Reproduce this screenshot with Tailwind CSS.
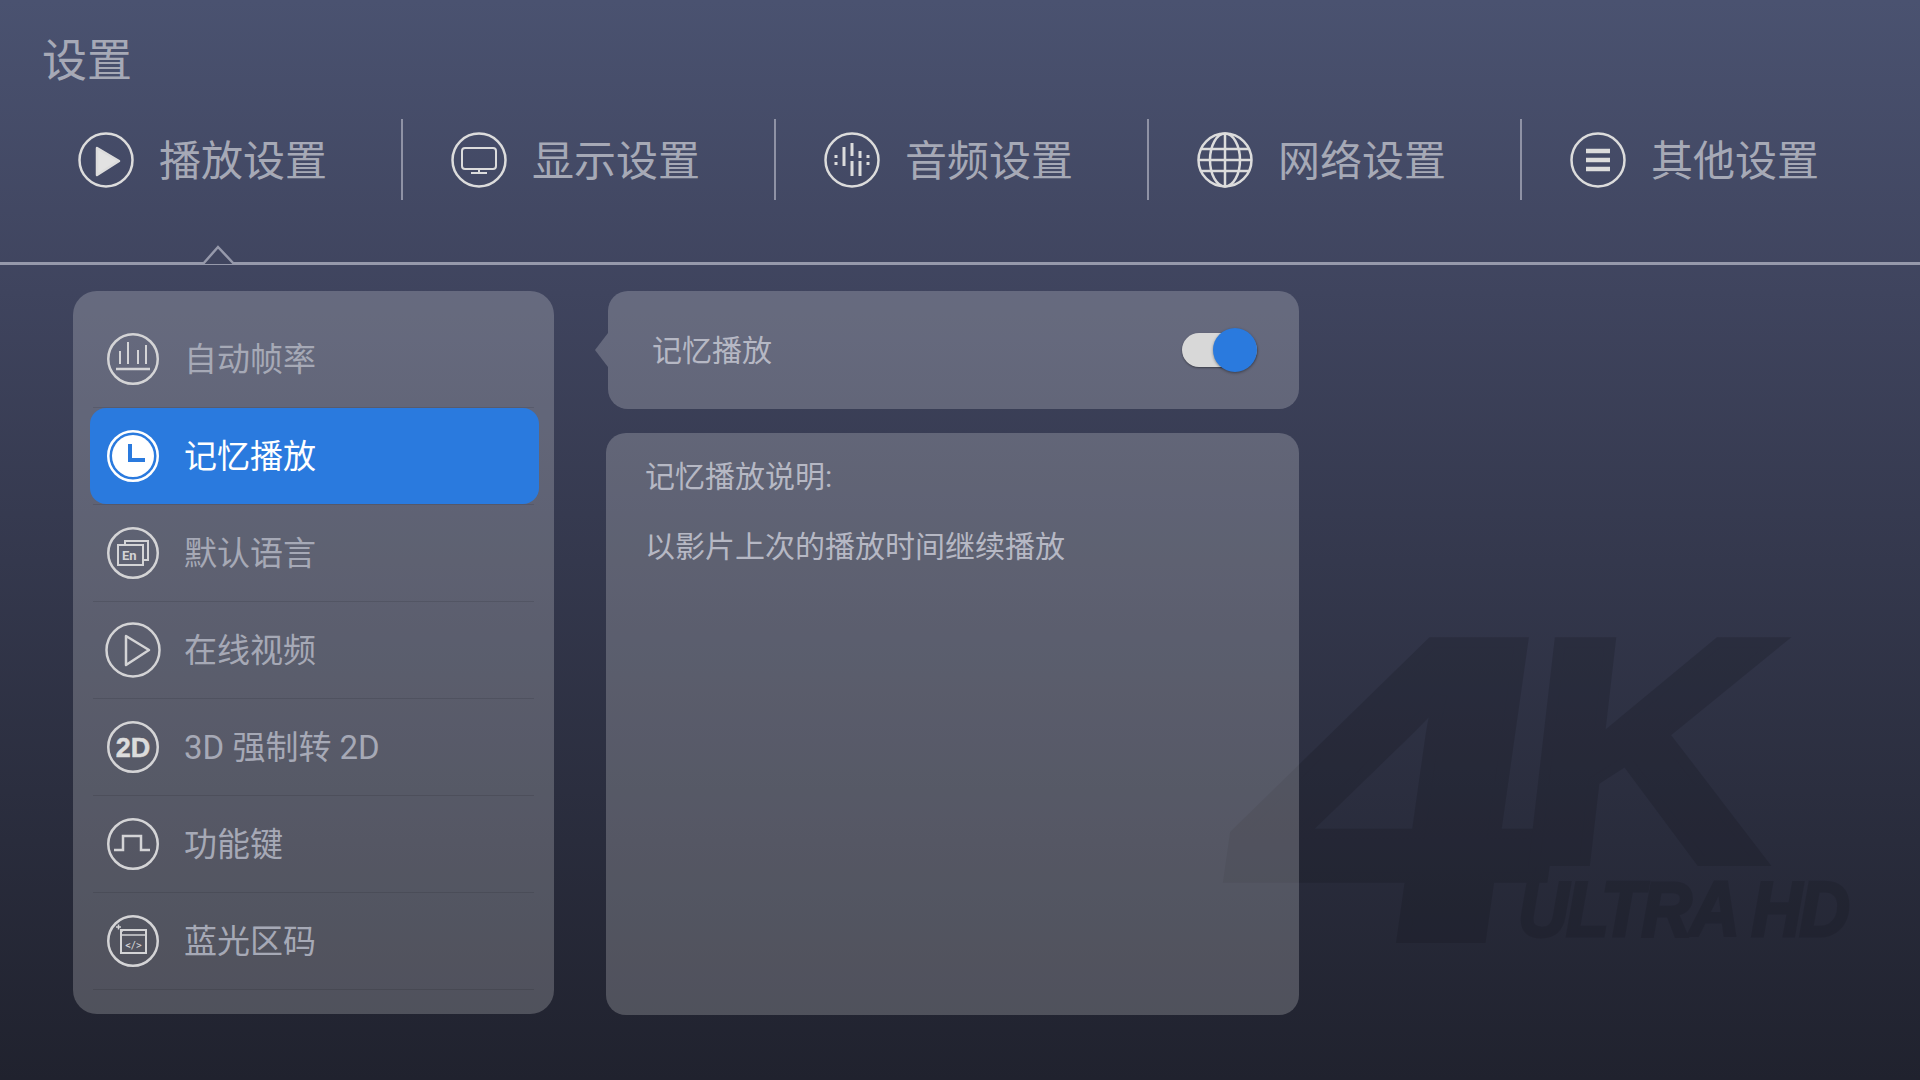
<!DOCTYPE html>
<html lang="zh-CN">
<head>
  <meta charset="UTF-8" />
  <title>设置</title>
  <script src="https://cdn.jsdelivr.net/npm/@tailwindcss/browser@4"></script>
</head>
<body class="relative w-[1920px] h-[1080px] overflow-hidden bg-gradient-to-b from-[#4a5270] via-[#3f445e] via-27% to-[#20222e] text-[#a6a9b6] font-['Roboto','Noto_Sans_CJK_SC',sans-serif]">

  <!-- 4K watermark, sits under the panels -->
  <div class="absolute left-0 top-0 w-full h-full text-[#14151d] opacity-[0.22] font-['Liberation_Sans',sans-serif] font-bold select-none">
    <span class="absolute left-[1256px] top-[635px] text-[430px] leading-[0.72] origin-top-left scale-x-[1.35] -skew-x-6 [-webkit-text-stroke:10px_#14151d]">4</span>
    <span class="absolute left-[1537px] top-[637px] text-[318px] leading-[0.72] origin-top-left scale-x-[1.1] -skew-x-6 [-webkit-text-stroke:10px_#14151d]">K</span>
    <span class="absolute left-[1518px] top-[881px] text-[78px] leading-[0.72] tracking-[-3px] italic origin-top-left scale-x-[0.9] [-webkit-text-stroke:3px_#14151d]">ULTRA HD</span>
  </div>

  <div class="relative">
    <h1 class="pt-[38px] pl-[42px] text-[45px] leading-[48px] font-normal">设置</h1>

    <!-- Tabs -->
    <div class="flex mt-[33px] h-[81px] pl-[30px] text-[42px]">
      <div class="w-[373px] flex items-center gap-[25px] pl-[48px] border-r-2 border-[#8f92a5]">
        <svg class="w-[56px] h-[56px]" viewBox="0 0 56 56" fill="none" stroke="#dcdcdc" stroke-width="2.500"><circle cx="28" cy="28" r="26.500"/><path d="M19 16 41 29 19 43z" fill="#e2e2e2" stroke-linejoin="round"/></svg>
        <span class="pt-[4px]">播放设置</span>
      </div>
      <div class="w-[373px] flex items-center gap-[25px] pl-[48px] border-r-2 border-[#8f92a5]">
        <svg class="w-[56px] h-[56px]" viewBox="0 0 56 56" fill="none" stroke="#dcdcdc" stroke-width="2.500"><circle cx="28" cy="28" r="26.500"/><rect x="11" y="16" width="34" height="21" rx="3" stroke-width="2"/><path d="M28 37v4M20 41h16" stroke-width="2"/></svg>
        <span class="pt-[4px]">显示设置</span>
      </div>
      <div class="w-[373px] flex items-center gap-[25px] pl-[48px] border-r-2 border-[#8f92a5]">
        <svg class="w-[56px] h-[56px]" viewBox="0 0 56 56" fill="none" stroke="#dcdcdc" stroke-width="2.500"><circle cx="28" cy="28" r="26.500"/><path d="M12 23v3M12 30v3M20 15v19M28 11v13M28 29v15M36 19v7M36 29v15M44 23v3M44 30v3" stroke-width="3"/></svg>
        <span class="pt-[4px]">音频设置</span>
      </div>
      <div class="w-[373px] flex items-center gap-[25px] pl-[48px] border-r-2 border-[#8f92a5]">
        <svg class="w-[56px] h-[56px]" viewBox="0 0 56 56" fill="none" stroke="#dcdcdc" stroke-width="2.500"><circle cx="28" cy="28" r="26.500"/><ellipse cx="28" cy="28" rx="15" ry="26.500"/><path d="M28 1.500v53M1.500 28h53M4 17h48M4 39h48"/></svg>
        <span class="pt-[4px]">网络设置</span>
      </div>
      <div class="w-[373px] flex items-center gap-[25px] pl-[48px]">
        <svg class="w-[56px] h-[56px]" viewBox="0 0 56 56" fill="none" stroke="#dcdcdc" stroke-width="2.500"><circle cx="28" cy="28" r="26.500"/><path d="M16 19h24M16 28h24M16 37h24" stroke-width="4.500"/></svg>
        <span class="pt-[4px]">其他设置</span>
      </div>
    </div>

    <!-- Rule under the tabs -->
    <div class="relative mt-[62px] h-[3px] bg-[#9699ab]">
      <svg class="absolute left-[202px] top-[-17px] w-[34px] h-[21px]" viewBox="0 0 34 21"><path d="M1 19 16 2 32 19" fill="#40455f" stroke="#9699ab" stroke-width="2.500"/></svg>
    </div>

    <div class="flex items-start mt-[26px] pl-[73px]">
      <!-- Left menu -->
      <div class="w-[481px] h-[723px] pt-[20px] px-[20px] rounded-[24px] bg-white/[0.205] text-[33px]">
        <div class="border-b border-black/10">
          <div class="h-[96px] -ml-[3px] -mr-[5px] pl-[17px] flex items-center gap-[25px] rounded-[16px]">
            <svg class="w-[52px] h-[52px]" viewBox="0 0 52 52" fill="none" stroke="#d4d4d6" stroke-width="2.500"><circle cx="26" cy="26" r="24.750"/><path d="M13 18v13M21 9v22M31 17v14M39 12v19" stroke-width="2"/><path d="M9 36h34"/></svg>
            <span class="pt-[2px]">自动帧率</span>
          </div>
        </div>
        <div class="border-b border-black/10">
          <div class="h-[96px] -ml-[3px] -mr-[5px] pl-[17px] flex items-center gap-[25px] rounded-[16px] bg-[#2a7ade] text-white">
            <svg class="w-[52px] h-[52px]" viewBox="0 0 52 52" fill="none" stroke="#fff" stroke-width="2.500"><circle cx="26" cy="26" r="24.750"/><circle cx="26" cy="26" r="21" fill="#fff" stroke="none"/><path d="M23 14v16h15" stroke="#2a7ade" stroke-width="4"/></svg>
            <span class="pt-[2px]">记忆播放</span>
          </div>
        </div>
        <div class="border-b border-black/10">
          <div class="h-[96px] -ml-[3px] -mr-[5px] pl-[17px] flex items-center gap-[25px] rounded-[16px]">
            <svg class="w-[52px] h-[52px]" viewBox="0 0 52 52" fill="none" stroke="#d4d4d6" stroke-width="2.500"><circle cx="26" cy="26" r="24.750"/><path d="M18 18v-4h23v19h-5" stroke-width="2"/><rect x="11" y="18" width="25" height="20" stroke-width="2"/><text x="15" y="33" font-family="Roboto" font-size="13" font-weight="700" fill="#d4d4d6" stroke="none">En</text></svg>
            <span class="pt-[2px]">默认语言</span>
          </div>
        </div>
        <div class="border-b border-black/10">
          <div class="h-[96px] -ml-[3px] -mr-[5px] pl-[17px] flex items-center gap-[25px] rounded-[16px]">
            <svg class="w-[52px] h-[52px] overflow-visible" viewBox="0 0 52 52" fill="none" stroke="#d4d4d6" stroke-width="2.500"><circle cx="26" cy="26" r="26.500"/><path d="M19 12 42 26 19 41z" stroke-linejoin="round"/></svg>
            <span class="pt-[2px]">在线视频</span>
          </div>
        </div>
        <div class="border-b border-black/10">
          <div class="h-[96px] -ml-[3px] -mr-[5px] pl-[17px] flex items-center gap-[25px] rounded-[16px]">
            <svg class="w-[52px] h-[52px]" viewBox="0 0 52 52" fill="none" stroke="#d4d4d6" stroke-width="2.500"><circle cx="26" cy="26" r="24.750"/><text x="26" y="35.500" text-anchor="middle" font-family="Liberation Sans" font-size="27" font-weight="700" fill="#dcdcdc" stroke="#dcdcdc" stroke-width="0.500">2D</text></svg>
            <span class="pt-[2px]">3D 强制转 2D</span>
          </div>
        </div>
        <div class="border-b border-black/10">
          <div class="h-[96px] -ml-[3px] -mr-[5px] pl-[17px] flex items-center gap-[25px] rounded-[16px]">
            <svg class="w-[52px] h-[52px]" viewBox="0 0 52 52" fill="none" stroke="#d4d4d6" stroke-width="2.500"><circle cx="26" cy="26" r="24.750"/><path d="M7 32h9V18h18v14h9"/></svg>
            <span class="pt-[2px]">功能键</span>
          </div>
        </div>
        <div class="border-b border-black/10">
          <div class="h-[96px] -ml-[3px] -mr-[5px] pl-[17px] flex items-center gap-[25px] rounded-[16px]">
            <svg class="w-[52px] h-[52px]" viewBox="0 0 52 52" fill="none" stroke="#d4d4d6" stroke-width="2.500"><circle cx="26" cy="26" r="24.750"/><rect x="14" y="15" width="25" height="23" stroke-width="2"/><path d="M14 20h25M9 12h5M11.500 9.500v5M15 16h1" stroke-width="1.500"/><text x="26.500" y="33.500" text-anchor="middle" font-family="Roboto" font-size="11.500" fill="#d4d4d6" stroke="none">&lt;/&gt;</text></svg>
            <span class="pt-[2px]">蓝光区码</span>
          </div>
        </div>
      </div>

      <!-- Right column -->
      <div class="ml-[52px] w-[693px] text-[30px] text-[#b6b8c4]">
        <div class="relative ml-[2px] h-[118px] flex items-center justify-between pl-[44px] rounded-[20px] bg-white/[0.205]">
          <div class="absolute left-[-13px] top-[42px] w-[13px] h-[34px] bg-white/[0.205] [clip-path:polygon(100%_0,0_50%,100%_100%)]"></div>
          <span>记忆播放</span>
          <!-- Toggle -->
          <div class="relative w-[75px] h-[34px] mr-[42px] rounded-full bg-[#d8d8d8] shadow-[0_1px_2px_rgba(0,0,0,0.4)]">
            <div class="absolute right-0 top-[-5px] w-[44px] h-[44px] rounded-full bg-[#2a7ade] shadow-[0_1px_3px_rgba(0,0,0,0.4)]"></div>
          </div>
        </div>
        <div class="mt-[24px] h-[582px] pt-[20px] pl-[39px] rounded-[20px] bg-white/[0.205]">
          <p class="leading-[48px]">记忆播放说明:</p>
          <p class="mt-[22px] leading-[48px]">以影片上次的播放时间继续播放</p>
        </div>
      </div>
    </div>
  </div>
</body>
</html>
